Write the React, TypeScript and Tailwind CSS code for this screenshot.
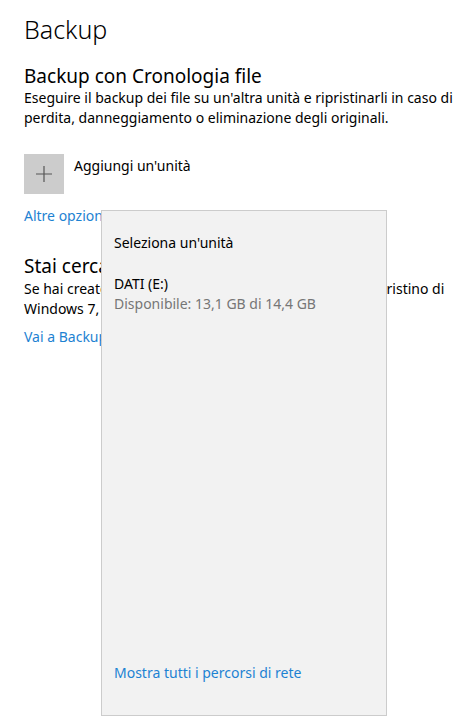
export default function App() {
  const font = { fontFamily: '"Segoe UI", "Noto Sans", sans-serif' };
  return (
    <div
      className="relative w-[466px] h-[728px] overflow-hidden bg-white text-black"
      style={font}
    >
      <div className="pl-6 pt-[11px]">
        <h1 className="text-[25px] leading-9 font-light">Backup</h1>

        <h2 className="mt-[17px] text-[19px] leading-6">Backup con Cronologia file</h2>
        <p className="text-[14px] leading-5">
          Eseguire il backup dei file su un'altra unità e ripristinarli in caso di
          <br />
          perdita, danneggiamento o eliminazione degli originali.
        </p>

        <div className="mt-[26px] flex items-start gap-[10px]">
          <div className="w-10 h-10 bg-[#cccccc] flex items-center justify-center">
            <svg width="18" height="18" viewBox="0 0 18 18">
              <path d="M9 1v16M1 9h16" stroke="#555" strokeWidth="1.2" />
            </svg>
          </div>
          <span className="text-[14px] leading-5 pt-[2px]">Aggiungi un'unità</span>
        </div>

        <a className="mt-[12px] block text-[14px] leading-5 text-[#1d82d2]">Altre opzioni</a>

        <h2 className="mt-[28px] text-[19px] leading-6">Stai cercando un backup meno recente?</h2>
        <p className="pt-[1px] text-[14px] leading-5">
          Se hai creato backup usando lo strumento Backup e ripristino di
          <br />
          Windows 7, funzionerà ancora in Windows 10.
        </p>
        <a className="mt-[8px] block text-[14px] leading-5 text-[#1d82d2]">
          Vai a Backup e ripristino (Windows 7)
        </a>
      </div>

      <div className="absolute left-[101px] top-[210px] w-[286px] h-[506px] bg-[#f2f2f2] border border-[#cccccc] flex flex-col pl-3 pt-[22px] pb-[32px]">
        <div className="text-[14px] leading-5">Seleziona un'unità</div>
        <div className="mt-[21px] text-[14px] leading-5">DATI (E:)</div>
        <div className="text-[14px] leading-5 text-[#767676]">Disponibile: 13,1 GB di 14,4 GB</div>
        <a className="mt-auto text-[14px] leading-5 text-[#1d82d2]">Mostra tutti i percorsi di rete</a>
      </div>
    </div>
  );
}
